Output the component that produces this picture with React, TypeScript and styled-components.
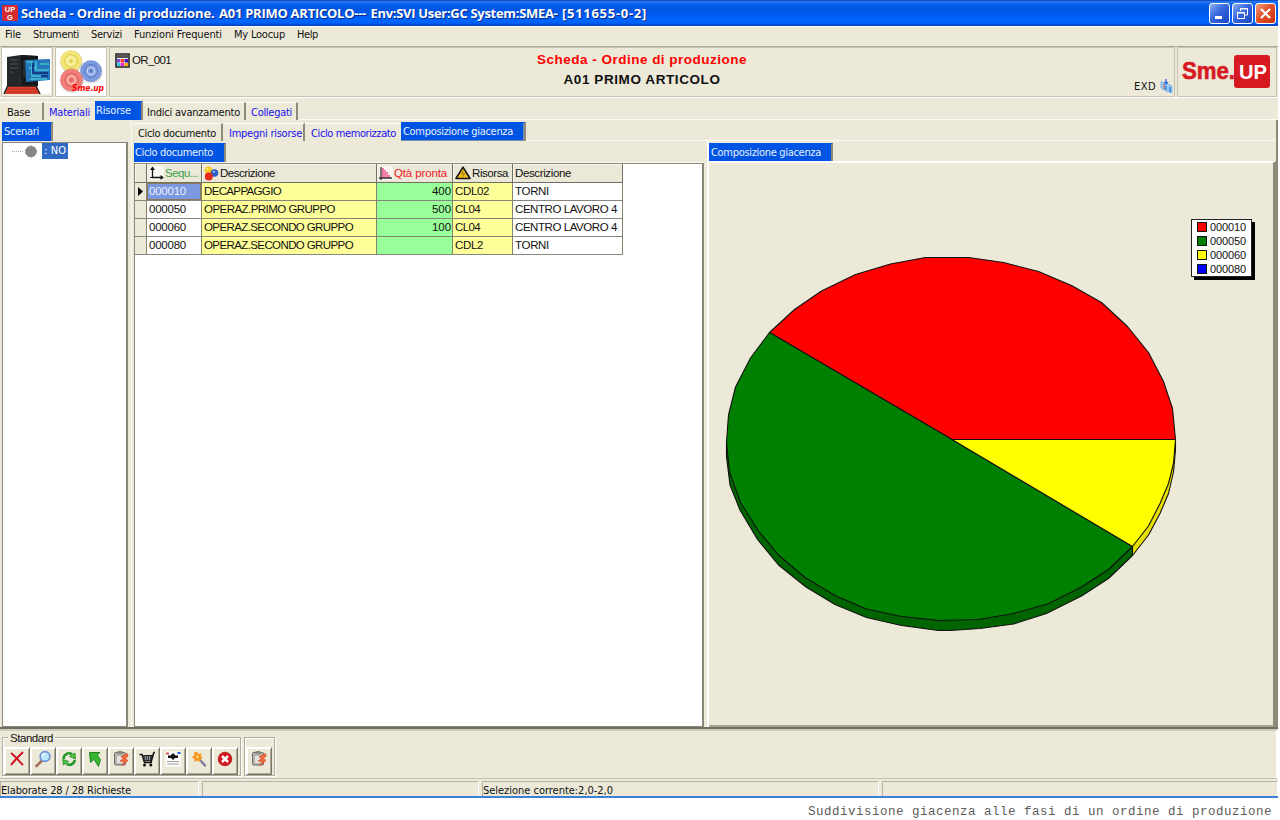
import React, { useLayoutEffect, useRef, useState } from "react";
import styled, { createGlobalStyle } from "styled-components";

const face = "#ece9d8";
const blue = "#0054e3";
const ui = `"DejaVu Sans Condensed", "DejaVu Sans", sans-serif`;
const sans = `"Liberation Sans", Arial, sans-serif`;

const GlobalStyle = createGlobalStyle`
  * { box-sizing: border-box; }
  body { margin: 0; background: #fff; overflow: hidden; }
  svg { display: block; flex: none; }
`;

const Run = styled.span`
  display: inline-block;
  white-space: pre;
  flex: none;
`;

/* Spreads the letters so that the text takes exactly `w` pixels. */
function Fit({ w, children }: { w: number; children: string }) {
  const ref = useRef<HTMLSpanElement>(null);
  const [gap, setGap] = useState(0);
  useLayoutEffect(() => {
    const el = ref.current;
    if (el) setGap((w - el.getBoundingClientRect().width) / children.length);
  }, [w, children]);
  return (
    <Run ref={ref} style={{ letterSpacing: gap }}>
      {children}
    </Run>
  );
}

const Page = styled.div`
  width: 1280px;
  height: 820px;
  background: #fff;
  font: 11px/14px ${ui};
  color: #111;
`;
const Window = styled.div`
  width: 1278px;
  height: 798px;
  display: flex;
  flex-direction: column;
  background: ${face};
  border-bottom: 2px solid #3f80d6;
`;

const TitleBar = styled.header`
  height: 26px;
  flex: none;
  display: flex;
  align-items: center;
  padding: 0 2px 0 2px;
  background: linear-gradient(#0b3fc0 0, #2a80f5 2px, #0561ee 4px, #0055e5 9px, #005cf2 16px, #0066ff 21px, #0060f2 23px, #003cc0 26px);
`;
const TitleText = styled.h1`
  margin: 0 0 0 3px;
  flex: 1;
  display: flex;
  gap: 4.5px;
  font: bold 13px/18px "Open Sans", "Noto Sans", sans-serif;
  color: #fff;
  text-shadow: 1px 1px 0 #0a2a86;
`;
const WinButtons = styled.div`
  display: flex;
  gap: 2px;
`;
const WinButton = styled.button<{ $close?: boolean }>`
  width: 21px;
  height: 21px;
  padding: 0;
  border: 1px solid #fff;
  border-radius: 3px;
  display: grid;
  place-items: center;
  background: ${(p) =>
    p.$close
      ? "linear-gradient(135deg, #f0a080, #e2522a 45%, #c8320a)"
      : "linear-gradient(135deg, #8db0f5, #3566de 45%, #1c46c4)"};
`;

const MenuBar = styled.nav`
  height: 20px;
  flex: none;
  display: flex;
  align-items: center;
  padding: 0 0 3px 5px;
  gap: 12px;
  border-top: 1px solid #fff;
`;

const Banner = styled.section`
  height: 52px;
  flex: none;
  display: flex;
  gap: 2px;
  padding: 0 1px 0 1px;
  border-top: 1px solid #aca899;
  border-bottom: 1px solid #fff;
`;
const BannerBox = styled.div<{ $w?: number }>`
  ${(p) => (p.$w ? `width: ${p.$w}px; flex: none;` : "flex: 1;")}
  border: 1px solid;
  border-color: #fff #b5b1a2 #b5b1a2 #fff;
  outline: 1px solid #c5c2b2;
  outline-offset: -1px;
  display: flex;
`;
const BannerInfo = styled.div`
  width: 426px;
  display: flex;
  gap: 2px;
  padding: 5px 0 0 5px;
  font-family: ${sans};
  font-size: 11.5px;
`;
const BannerTitles = styled.div`
  width: 212px;
  display: flex;
  flex-direction: column;
  align-items: center;
  gap: 5px;
  padding-top: 4px;
  font: bold 13.5px/15px ${sans};
`;
const RedTitle = styled.div`
  color: #f00;
`;
const BannerUser = styled.div`
  flex: 1;
  display: flex;
  justify-content: flex-end;
  align-items: flex-end;
  gap: 4px;
  padding: 0 1px 2px 0;
`;

const TabRow = styled.div<{ $top?: number; $left?: number; $h: number; $line?: boolean }>`
  height: ${(p) => p.$h}px;
  flex: none;
  display: flex;
  padding: ${(p) => p.$top ?? 0}px 0 0 ${(p) => p.$left ?? 0}px;
  border-bottom: ${(p) => (p.$line === false ? 0 : 1)}px solid #fbfaf4;
`;
const Tab = styled.div<{ $w: number; $active?: boolean; $link?: boolean; $pad?: number; $focus?: boolean; $bare?: boolean }>`
  width: ${(p) => p.$w}px;
  height: ${(p) => (p.$active ? 19 : 18)}px;
  margin-top: ${(p) => (p.$active ? 0 : 1)}px;
  padding: ${(p) => (p.$active ? 2 : 3)}px 0 0 ${(p) => p.$pad ?? 4}px;
  flex: none;
  border-top: 1px solid ${(p) => (p.$active ? blue : "#fff")};
  border-right: ${(p) => (p.$bare ? 0 : 2)}px solid #8d8a7c;
  background: ${(p) => (p.$active ? blue : face)};
  color: ${(p) => (p.$active ? "#e8f0ff" : p.$link ? "#1a10f0" : "#111")};
  ${(p) => p.$focus && "box-shadow: inset -1px -1px 0 #7a90b0;"}
`;

const Body = styled.main`
  height: 609px;
  flex: none;
  display: flex;
  border-bottom: 2px solid #716f64;
`;
const LeftPane = styled.aside`
  width: 131px;
  flex: none;
  display: flex;
  flex-direction: column;
  padding: 2px 3px 0 2px;
`;
const Tree = styled.div`
  width: 126px;
  flex: 1;
  display: flex;
  align-items: flex-start;
  background: #fff;
  border: 1px solid #8a8778;
  border-right-width: 2px;
  padding-left: 8px;
`;
const TreeValue = styled.div`
  width: 26px;
  height: 16px;
  margin: 0 0 0 3px;
  padding: 1px 0 0 2px;
  background: #316ac5;
  color: #fff;
`;
const RightPane = styled.section`
  flex: 1;
  display: flex;
  flex-direction: column;
  border-left: 1px solid #f8f7f0;
  border-right: 2px solid #8d8a7c;
  padding: 2px 0 0 1px;
`;
const Split = styled.div`
  flex: 1;
  display: flex;
  min-height: 0;
`;
const GridPane = styled.div`
  width: 571px;
  flex: none;
  display: flex;
  flex-direction: column;
`;
const GridArea = styled.div`
  flex: 1;
  margin-left: 1px;
  background: #fff;
  border: 1px solid #8a8778;
  border-right-width: 2px;
`;
const ChartPane = styled.div`
  flex: 1;
  margin-left: 3px;
  display: flex;
  flex-direction: column;
  border-left: 2px solid #fff;
`;
const ChartArea = styled.div`
  flex: 1;
  position: relative;
  border-top: 2px solid #fff;
  border-right: 3px solid #8d8a7c;
  border-bottom: 2px solid #a5a292;
`;

const Table = styled.div`
  width: 488px;
  display: grid;
  grid-template-columns: 12px 55px 175px 76px 60px 110px;
  font: 11.5px/16px ${sans};
`;
const HeadCell = styled.div<{ $color?: string }>`
  height: 19px;
  display: flex;
  align-items: center;
  gap: 1px;
  padding-left: 2px;
  background: #ebe8d8;
  color: ${(p) => p.$color ?? "#111"};
  border-right: 1px solid #716f64;
  border-bottom: 1px solid #716f64;
  box-shadow: inset 1px 1px 0 #f8f7ee;
`;
const Cell = styled.div<{ $bg?: string; $right?: boolean; $sel?: boolean }>`
  height: 18px;
  display: flex;
  align-items: center;
  justify-content: ${(p) => (p.$right ? "flex-end" : "flex-start")};
  padding: 0 1px 1px 2px;
  background: ${(p) => (p.$sel ? "#7b98e0" : p.$bg ?? "#fff")};
  color: ${(p) => (p.$sel ? "#e9efff" : "#111")};
  border-right: 1px solid #85826f;
  border-bottom: 1px solid #85857c;
  ${(p) => p.$sel && "box-shadow: inset 0 0 0 1px #8a7a58;"}
`;

const Legend = styled.div`
  position: absolute;
  left: 482px;
  top: 56px;
  width: 61px;
  height: 58px;
  padding: 0 0 0 5px;
  background: #fff;
  border: 1px solid #222;
  box-shadow: 3px 3px 0 #000;
  font: 11px/14px ${sans};
`;
const LegendRow = styled.div`
  height: 14px;
  display: flex;
  align-items: center;
  gap: 3px;
`;
const Swatch = styled.i<{ $c: string }>`
  width: 10px;
  height: 10px;
  border: 1px solid #111;
  background: ${(p) => p.$c};
`;

const ToolArea = styled.section`
  height: 50px;
  flex: none;
  display: flex;
  align-items: flex-start;
  gap: 3px;
  padding: 2px 0 0 2px;
  border-top: 2px solid #cfcbbd;
  border-bottom: 1px solid #c4c0b0;
  border-right: 2px solid #fff;
`;
const Group = styled.div`
  margin-top: 4px;
  height: 39px;
  border: 1px solid #b0ad9e;
  box-shadow: inset 1px 1px 0 #fff, 1px 1px 0 #fff;
  padding: 0 2px 0 1px;
  display: flex;
  flex-direction: column;
`;
const GroupTitle = styled.div`
  height: 9px;
  display: flex;
  align-items: center;
`;
const GroupLabel = styled.span`
  margin-left: 4px;
  margin-top: -9px;
  padding: 0 2px;
  background: ${face};
  font: 11.5px/14px ${sans};
`;
const Buttons = styled.div`
  display: flex;
`;
const ToolButton = styled.button`
  width: 26px;
  height: 28px;
  padding: 0 0 4px;
  display: grid;
  place-items: center;
  background: ${face};
  border: 1px solid;
  border-color: #fff #777466 #777466 #fff;
  box-shadow: inset 1px 1px 0 #fff, inset -1px -1px 0 #aca899;
`;

const StatusBar = styled.footer`
  height: 17px;
  flex: none;
  display: flex;
  gap: 3px;
  padding-top: 2px;
`;
const StatusCell = styled.div<{ $w?: number }>`
  ${(p) => (p.$w ? `width: ${p.$w}px; flex: none;` : "flex: 1;")}
  height: 15px;
  border-top: 1px solid #b5b1a2;
  border-left: 1px solid #b5b1a2;
  border-right: 1px solid #fff;
  padding-top: 2px;
`;
const Caption = styled.p`
  margin: 6px 0 0;
  padding-left: 808px;
  font: 12.5px/16px "Liberation Mono", "Courier New", monospace;
  color: #5c5c5c;
`;

const AppIcon = () => (
  <svg width="16" height="16" viewBox="0 0 16 16">
    <rect width="16" height="16" rx="1" fill="#d52a30" />
    <g fill="#fff" fontFamily="Liberation Sans" fontWeight="bold" fontSize="7.5" textAnchor="middle">
      <text x="8" y="7">UP</text>
      <text x="8" y="14.5">G</text>
    </g>
  </svg>
);

const Computer = () => (
  <svg width="49" height="46" viewBox="0 0 49 46">
    <rect width="49" height="46" fill="#fff" />
    <path d="M5 9 19 7 36 8V38L20 41 5 39Z" fill="#25282b" />
    <path d="M19 7 36 8V38L20 41Z" fill="#151719" />
    <path d="M8 12h8M8 16h8M8 20h8M8 24h3" stroke="#4a5054" />
    <path d="M22 12v18M26 12v12" stroke="#3c4042" />
    <path d="M23 12 48 11V32L24 34Z" fill="#2476bd" />
    <path d="M25 14 30 14V28H46M34 13V22H47M27 20h8M38 16h9M28 31h17" fill="none" stroke="#43c0cc" strokeWidth="1.6" />
    <path d="M31 15v10h15M39 28h7" fill="none" stroke="#153d87" strokeWidth="2" />
    <path d="M6 38H34L38 46H2Z" fill="#e0442e" />
    <path d="M2 46 6 37M34 38 38 46M6 38H34" stroke="#222" strokeWidth="1.5" fill="none" />
    <path d="M6 41H35M5 44H37" stroke="#b82a1e" />
  </svg>
);

const Gear = ({ x, y, r, c, d }: { x: number; y: number; r: number; c: string; d: string }) => (
  <g>
    <circle cx={x + 0.5} cy={y + 1.2} r={r + 0.6} fill="#bbb" opacity=".5" />
    <circle cx={x} cy={y} r={r} fill={c} stroke={d} strokeWidth="1" strokeOpacity=".6" strokeDasharray="1.5 1" />
    <circle cx={x} cy={y} r={r * 0.62} fill="none" stroke={d} strokeWidth=".8" />
    <circle cx={x} cy={y} r={r * 0.36} fill={c} stroke="#fff" strokeWidth=".7" />
    <circle cx={x} cy={y} r="1.2" fill={d} />
  </g>
);
const Gears = () => (
  <svg width="50" height="48" viewBox="0 0 50 48">
    <rect width="50" height="48" fill="#fff" />
    <Gear x={15} y={13} r={10.5} c="#f3e676" d="#d9c450" />
    <Gear x={35} y={23} r={10.5} c="#7d9be0" d="#5272bd" />
    <Gear x={15.5} y={32} r={11} c="#f08078" d="#d65c58" />
    <text x="16" y="43" fill="#f00" fontFamily="DejaVu Sans" fontWeight="bold" fontStyle="italic" fontSize="8.5" textLength="32" lengthAdjust="spacingAndGlyphs">Sme.up</text>
  </svg>
);

const Palette = () => (
  <svg width="15" height="15" viewBox="0 0 15 15">
    <path d="M1 1H14V14H1Z" fill="#eee" stroke="#222" strokeWidth="1.6" />
    <path d="M2 2h11v3H2z" fill="#555" />
    <path d="M2 6h3v3.5H2z" fill="#74d" /><path d="M5.5 6h3.5v3.5H5.5z" fill="#f33" /><path d="M9.5 6h3.5v3.5h-3.5z" fill="#41b" />
    <path d="M2 10h3v3H2z" fill="#3cd" /><path d="M5.5 10h3.5v3H5.5z" fill="#e2d" /><path d="M9.5 10h3.5v3h-3.5z" fill="#fa0" />
  </svg>
);
const Books = () => (
  <svg width="13" height="15" viewBox="0 0 13 15">
    <path d="M1 3 5 4 12 7V14L6 12 1 9Z" fill="#9cd0f5" stroke="#5fa8e8" strokeWidth=".7" />
    <path d="M6 0V5M4.5 3 6 5 8 3" stroke="#3368dd" fill="none" strokeWidth="1.3" />
    <path d="M4 5V10" stroke="#c43" /><path d="M6 7v4M10 8v5" stroke="#3378e2" strokeWidth="1.5" />
  </svg>
);
const SmeUpLogo = () => (
  <svg width="97" height="46" viewBox="0 0 97 46">
    <rect x="56" y="7" width="36" height="33" rx="3" fill="#d71921" />
    <g fontFamily="Liberation Sans" fontWeight="bold">
      <text x="4" y="31" fontSize="24" fill="#d71921" stroke="#d71921" strokeWidth=".6" textLength="53" lengthAdjust="spacingAndGlyphs">Sme.</text>
      <text x="61" y="31" fontSize="21" fill="#fff" textLength="28" lengthAdjust="spacingAndGlyphs">UP</text>
    </g>
  </svg>
);

const AxesIcon = () => (
  <svg width="15" height="14" viewBox="0 0 15 14">
    <rect width="15" height="14" fill="#faf9f4" />
    <path d="M3.5 1V11.5H14" fill="none" stroke="#111" strokeWidth="1.3" />
    <path d="M1 4 3.5 .5 6 4ZM11.5 9 14.8 11.5 11.5 14Z" fill="#111" />
    <path d="M1 11.5h3" stroke="#111" />
  </svg>
);
const BallsIcon = () => (
  <svg width="15" height="15" viewBox="0 0 15 15">
    <circle cx="4.5" cy="4.2" r="3.8" fill="#f6c922" /><circle cx="10.5" cy="7" r="3.8" fill="#2d5fc4" />
    <circle cx="4.8" cy="10.5" r="4" fill="#e32a1c" />
    <circle cx="3.6" cy="3" r="1" fill="#fff3a0" /><circle cx="10" cy="5.8" r="1" fill="#b5cdf8" />
  </svg>
);
const HistoIcon = () => (
  <svg width="14" height="14" viewBox="0 0 14 14">
    <rect width="14" height="14" fill="#f8f6f0" />
    <path d="M3 12V2H5V4H7V6H9V9H11V12Z" fill="#f06a96" />
    <path d="M5 3v9M7 5v7M9 7v5" stroke="#fbd" strokeWidth=".6" />
    <path d="M2 1V14M0 12H13" stroke="#333" strokeWidth="1.3" />
  </svg>
);
const WarnIcon = () => (
  <svg width="16" height="14" viewBox="0 0 16 14">
    <path d="M8 1.2 15 12.5H1Z" fill="#f2bf18" stroke="#151515" strokeWidth="1.6" strokeLinejoin="round" />
    <path d="M8.5 4.5 6.5 8 9.5 7.5 7.5 10.5" fill="none" stroke="#8a6400" strokeWidth=".8" />
  </svg>
);

const toolIcons: Record<string, React.ReactNode> = {
  cross: <path d="M3 3C7 6 11 11 15 15M15 2C11 6 6 11 3 15" fill="none" stroke="#cf1020" strokeWidth="1.9" />,
  lens: (
    <>
      <path d="M8 10.5 2.5 16" stroke="#a87058" strokeWidth="2.6" strokeLinecap="round" />
      <circle cx="11" cy="6.5" r="4.9" fill="#b9e6fb" stroke="#6b8fd6" strokeWidth="1.6" />
      <path d="M8.5 6A3 3 0 0 1 11 3.7" stroke="#fff" strokeWidth="1.4" fill="none" />
    </>
  ),
  refresh: (
    <>
      <path d="M3.5 9A5.5 5.5 0 0 1 12 4.2" fill="none" stroke="#23992b" strokeWidth="2.6" />
      <path d="M9.5 6.5 15 3 15.5 9Z" fill="#4bc840" stroke="#147a1e" strokeWidth=".7" />
      <path d="M14.8 10A5.5 5.5 0 0 1 6.5 14" fill="none" stroke="#23992b" strokeWidth="2.6" />
      <path d="M8.8 11.5 3.3 15 2.8 9.5Z" fill="#4bc840" stroke="#147a1e" strokeWidth=".7" />
    </>
  ),
  arrow: <path d="M3.5 2.5H14L11.3 5.2 14.5 9.5 12.5 16.5 8 9.3 4.5 12.5Z" fill="#35b72e" stroke="#177a1b" strokeWidth=".9" />,
  clip: (
    <>
      <rect x="2.5" y="2.5" width="11" height="12.5" rx="1" fill="#b5b3ae" stroke="#6e6c69" />
      <rect x="5.5" y="1" width="5" height="3" fill="#8a8885" />
      <path d="M5 6h6v7H5z" fill="#e4e2dc" />
      <path d="M15.5 3.5 9 7 12 8.5 8 11 12.5 11.5 10 15.5 16 10.5 13.5 8.5 16 6Z" fill="#f26b3d" stroke="#d94c24" strokeWidth=".8" />
    </>
  ),
  cart: (
    <>
      <path d="M1.5 4.5H4L6.5 12.5H14M4.5 6 14 5.5 12.8 10.5H6M15.5 2.5H17M15.8 2.5 13 12.5" fill="none" stroke="#111" strokeWidth="1.5" />
      <path d="M5 6H14L12.5 10.5H6.3Z" fill="#444" />
      <path d="M7.5 6v4M9.5 6v4M11.5 6v4" stroke="#bbb" strokeWidth=".6" />
      <circle cx="6.5" cy="15" r="1.5" fill="#111" /><circle cx="12.8" cy="15" r="1.5" fill="#111" />
    </>
  ),
  letter: (
    <>
      <rect x="1.5" y="1.5" width="15" height="15" fill="#fff" />
      <path d="M2 3.5H5" stroke="#d55" strokeWidth="2" /><path d="M13.5 3h3" stroke="#26c" strokeWidth="2" />
      <path d="M9 3 11.5 5.5H14V8H11L9 10 7 8H4V5.5H6.5Z" fill="#111" />
      <path d="M3 11.5H15M3 14H15" stroke="#999" />
    </>
  ),
  wand: (
    <>
      <path d="M9.5 9.5 15 15.5" stroke="#7b7c9d" strokeWidth="2.4" strokeLinecap="round" />
      <path d="M7 1.5 8.5 4 11.5 3 10.8 6 13 8 10.5 9 10 12 7.3 10.5 4.5 12 4.3 9 1.5 7.3 4.2 5.8 4 2.8Z" fill="#f99b25" />
      <circle cx="7.3" cy="7" r="2.2" fill="#ffd24d" stroke="#e36a18" strokeWidth=".7" />
    </>
  ),
  stop: (
    <>
      <circle cx="9" cy="9" r="6.8" fill="#d3151c" stroke="#a40e12" strokeWidth=".7" />
      <path d="M6 6 12 12M12 6 6 12" stroke="#fff" strokeWidth="2.5" />
    </>
  ),
};
const Tool = ({ name }: { name: string }) => (
  <ToolButton>
    <svg width="18" height="18" viewBox="0 0 18 18">{toolIcons[name]}</svg>
  </ToolButton>
);

const redSlice = "952,439.5 1175.5,439.5 1172.5,408.5 1163.5,381.5 1148.5,352.5 1127.5,326.5 1101.5,302.5 1071.5,285.5 1038.5,271.5 1003.5,262.5 968.5,257.5 925.5,257.5 890.5,264 855.5,274.5 821.5,291 794.5,309.5 769.5,332.5";
const greenRim = "769.5,332.5 750.5,358 735.5,387 728.5,415 726.5,442 729.5,472 740.5,502.5 758.5,531 778.5,555 805,577.5 835,595.5 866.5,609 901.5,616.5 940,620.5 978.5,619.5 1013.5,613.5 1047.5,604 1080.5,587.5 1108.5,569.5 1132.5,546.5";
const yellowSlice = "952,439.5 1175.5,439.5 1173.5,463.5 1168.5,483.5 1160,503.5 1148.5,526 1132.5,546.5";
const greenSide = "726.5,442 726.5,457 730,485 740,510 757.5,539.5 778.5,565 806,587 835,604.5 866.5,617.5 901.5,625.5 938.5,630.5 950,630.5 980,628.5 1013.5,624 1046.5,613.5 1081.5,596 1108.5,578.5 1132.5,555.5 1132.5,540 952,500";
const yellowSide = "1132.5,540 1132.5,555.5 1148.5,535 1160,513.5 1168.5,493.5 1173.5,472 1175.5,450 1175.5,439.5";

const Pie = () => (
  <svg width="563" height="560" viewBox="709 163 563 560">
    <g stroke="#111" strokeWidth="1.1" strokeLinejoin="round">
      <polygon points={greenSide} fill="#006400" />
      <polygon points={yellowSide} fill="#e6e000" />
      <polygon points={redSlice} fill="#ff0000" />
      <polygon points={`952,439.5 ${greenRim}`} fill="#008000" />
      <polygon points={yellowSlice} fill="#ffff00" />
    </g>
  </svg>
);

const yellow = "#ffff99";
const green = "#99ff99";
type Row = [string, string, number, string, string, number, string, number];
const rows: Row[] = [
  ["000010", "DECAPPAGGIO", 77, "400", "CDL02", 34, "TORNI", 34],
  ["000050", "OPERAZ.PRIMO GRUPPO", 131, "500", "CL04", 25, "CENTRO LAVORO 4", 102],
  ["000060", "OPERAZ.SECONDO GRUPPO", 149, "100", "CL04", 25, "CENTRO LAVORO 4", 102],
  ["000080", "OPERAZ.SECONDO GRUPPO", 149, "", "CDL2", 28, "TORNI", 34],
];
const legend: [string, string][] = [
  ["000010", "#ff0000"],
  ["000050", "#008000"],
  ["000060", "#ffff00"],
  ["000080", "#0000ff"],
];
const menu: [string, number][] = [
  ["File", 16], ["Strumenti", 46], ["Servizi", 31], ["Funzioni Frequenti", 88], ["My Loocup", 51], ["Help", 21],
];
const tools = ["cross", "lens", "refresh", "arrow", "clip", "cart", "letter", "wand", "stop"];

export default function App() {
  return (
    <Page>
      <GlobalStyle />
      <Window>
        <TitleBar>
          <AppIcon />
          <TitleText>
            <Fit w={193.5}>Scheda - Ordine di produzione.</Fit>
            <Fit w={147}>A01 PRIMO ARTICOLO---</Fit>
            <Fit w={187}>Env:SVI User:GC System:SMEA-</Fit>
            <Fit w={85}>[511655-0-2]</Fit>
          </TitleText>
          <WinButtons>
            <WinButton>
              <svg width="15" height="15"><path d="M3 11.5h7" stroke="#fff" strokeWidth="3" /></svg>
            </WinButton>
            <WinButton>
              <svg width="15" height="15" fill="none" stroke="#fff"><path d="M5.5 5V2.5H12.5V9H10M5 3h8M2.5 6.5H9.5V12.5H2.5ZM2 7h8" /></svg>
            </WinButton>
            <WinButton $close>
              <svg width="15" height="15"><path d="M3 3 12 12M12 3 3 12" stroke="#fff" strokeWidth="2.2" /></svg>
            </WinButton>
          </WinButtons>
        </TitleBar>
        <MenuBar>
          {menu.map(([label, w]) => <Fit key={label} w={w}>{label}</Fit>)}
        </MenuBar>
        <Banner>
          <BannerBox $w={52}><Computer /></BannerBox>
          <BannerBox $w={52}><Gears /></BannerBox>
          <BannerBox>
            <BannerInfo><Palette /><Fit w={39}>OR_001</Fit></BannerInfo>
            <BannerTitles>
              <RedTitle><Fit w={210}>Scheda - Ordine di produzione</Fit></RedTitle>
              <Fit w={157}>A01 PRIMO ARTICOLO</Fit>
            </BannerTitles>
            <BannerUser><Fit w={22}>EXD</Fit><Books /></BannerUser>
          </BannerBox>
          <BannerBox $w={100}><SmeUpLogo /></BannerBox>
        </Banner>
        <TabRow $h={22} $top={3}>
          <Tab $w={44} $pad={7}><Fit w={23}>Base</Fit></Tab>
          <Tab $w={51} $pad={5} $link $bare><Fit w={41}>Materiali</Fit></Tab>
          <Tab $w={48} $pad={1} $active><Fit w={35}>Risorse</Fit></Tab>
          <Tab $w={103}><Fit w={93}>Indici avanzamento</Fit></Tab>
          <Tab $w={52} $pad={5} $link><Fit w={41}>Collegati</Fit></Tab>
        </TabRow>
        <Body>
          <LeftPane>
            <TabRow $h={20} $line={false}>
              <Tab $w={51} $pad={2} $active><Fit w={35}>Scenari</Fit></Tab>
            </TabRow>
            <Tree>
              <svg width="28" height="17">
                <path d="M1 8.5H13" stroke="#aaa" strokeDasharray="1 1" />
                <circle cx="20" cy="8.5" r="5.5" fill="#858585" stroke="#858585" strokeDasharray="2 1.5" />
              </svg>
              <TreeValue><Fit w={22}>: NO</Fit></TreeValue>
            </Tree>
          </LeftPane>
          <RightPane>
            <TabRow $h={19}>
              <Tab $w={90} $pad={5}><Fit w={78}>Ciclo documento</Fit></Tab>
              <Tab $w={82} $pad={6} $link><Fit w={73}>Impegni risorse</Fit></Tab>
              <Tab $w={96} $pad={6} $link $bare><Fit w={85}>Ciclo memorizzato</Fit></Tab>
              <Tab $w={125} $pad={2} $active $focus><Fit w={110}>Composizione giacenza</Fit></Tab>
            </TabRow>
            <Split>
              <GridPane>
                <TabRow $h={22} $top={2} $left={1}>
                  <Tab $w={92} $pad={1} $active><Fit w={78}>Ciclo documento</Fit></Tab>
                </TabRow>
                <GridArea>
                  <Table>
                    <HeadCell />
                    <HeadCell $color="#3c9c4b"><AxesIcon /><Fit w={33}>Sequ...</Fit></HeadCell>
                    <HeadCell><BallsIcon /><Fit w={55}>Descrizione</Fit></HeadCell>
                    <HeadCell $color="#f2202a"><HistoIcon /><Fit w={53}>Qtà pronta</Fit></HeadCell>
                    <HeadCell><WarnIcon /><Fit w={36}>Risorsa</Fit></HeadCell>
                    <HeadCell><Fit w={56}>Descrizione</Fit></HeadCell>
                    {rows.map(([seq, desc, dw, qty, res, rw, name, nw], i) => (
                      <React.Fragment key={seq}>
                        <Cell $bg={face}>
                          {i === 0 && <svg width="7" height="9"><path d="M1 0 6 4.5 1 9Z" fill="#000" /></svg>}
                        </Cell>
                        <Cell $sel={i === 0}><Fit w={37}>{seq}</Fit></Cell>
                        <Cell $bg={yellow}><Fit w={dw}>{desc}</Fit></Cell>
                        <Cell $bg={green} $right>{qty && <Fit w={19}>{qty}</Fit>}</Cell>
                        <Cell $bg={yellow}><Fit w={rw}>{res}</Fit></Cell>
                        <Cell><Fit w={nw}>{name}</Fit></Cell>
                      </React.Fragment>
                    ))}
                  </Table>
                </GridArea>
              </GridPane>
              <ChartPane>
                <TabRow $h={20} $top={2} $line={false}>
                  <Tab $w={124} $pad={2} $active><Fit w={110}>Composizione giacenza</Fit></Tab>
                </TabRow>
                <ChartArea>
                  <Pie />
                  <Legend>
                    {legend.map(([label, c]) => (
                      <LegendRow key={label}><Swatch $c={c} /><Fit w={36}>{label}</Fit></LegendRow>
                    ))}
                  </Legend>
                </ChartArea>
              </ChartPane>
            </Split>
          </RightPane>
        </Body>
        <ToolArea>
          <Group>
            <GroupTitle><GroupLabel><Fit w={43}>Standard</Fit></GroupLabel></GroupTitle>
            <Buttons>{tools.map((name) => <Tool key={name} name={name} />)}</Buttons>
          </Group>
          <Group>
            <GroupTitle />
            <Buttons><Tool name="clip" /></Buttons>
          </Group>
        </ToolArea>
        <StatusBar>
          <StatusCell $w={199}><Fit w={130}>Elaborate 28 / 28 Richieste</Fit></StatusCell>
          <StatusCell $w={277} />
          <StatusCell $w={397}><Fit w={130}>Selezione corrente:2,0-2,0</Fit></StatusCell>
          <StatusCell />
        </StatusBar>
      </Window>
      <Caption><Fit w={464}>Suddivisione giacenza alle fasi di un ordine di produzione</Fit></Caption>
    </Page>
  );
}
